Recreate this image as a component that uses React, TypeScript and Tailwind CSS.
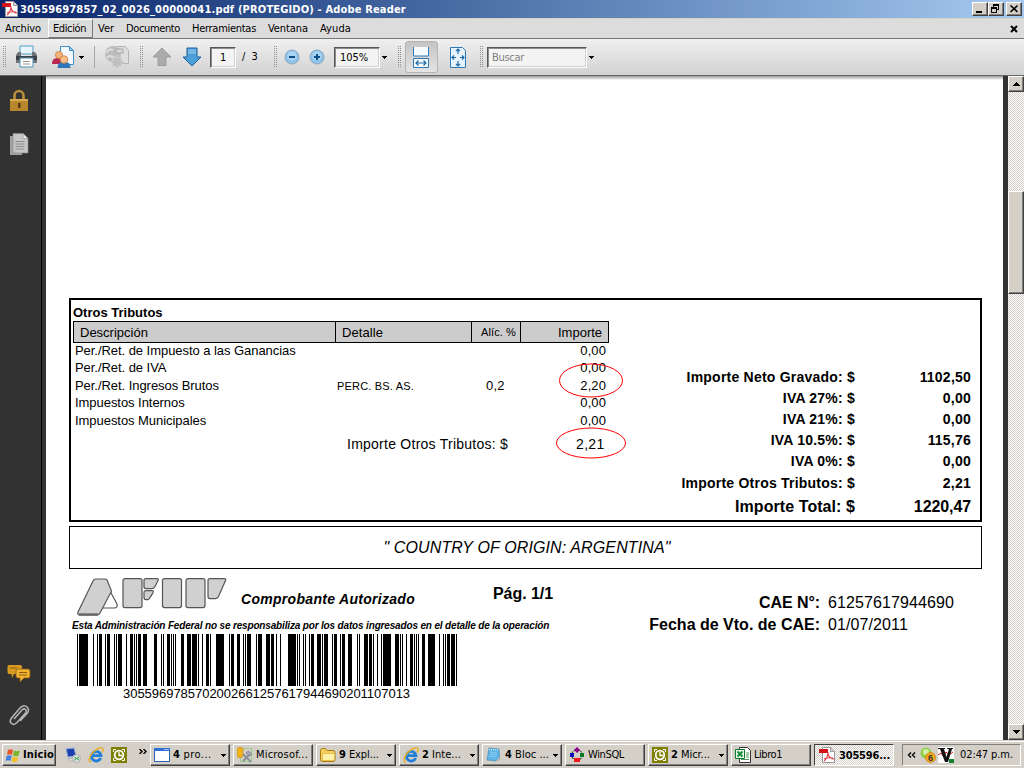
import React from "react";

const T = ({ c = "", children }: { c?: string; children: string }) => (
  <span className={"inline-block whitespace-pre " + c}>{children}</span>
);

const raised = "border border-t-white border-l-white border-r-[#404040] border-b-[#404040] bg-[#d4d0c8] shadow-[inset_-1px_-1px_0_#808080]";
const sunken = "border border-t-[#55575b] border-l-[#55575b] border-r-white border-b-white bg-[#f4f4f4] shadow-[inset_1px_1px_0_#8c8c8c,inset_-1px_-1px_0_#d4d0c8]";

// Barcode bars as [offset, width] pairs
const bars: [number, number][] = [
  [0, 1], [2, 9], [16, 1], [20, 1], [22, 3], [28, 1], [30, 3], [37, 1], [39, 1], [41, 4], [49, 1], [53, 3],
  [57, 1], [59, 1], [61, 3], [66, 4], [77, 3], [84, 1], [86, 1], [90, 3], [94, 1], [96, 1], [98, 1], [104, 3],
  [110, 4], [115, 5], [121, 1], [125, 1], [129, 3], [133, 1], [139, 8], [152, 1], [154, 3], [160, 3], [166, 1],
  [168, 1], [170, 4], [179, 1], [181, 4], [189, 4], [194, 3], [199, 1], [203, 1], [211, 8], [220, 1], [222, 1],
  [226, 1], [228, 1], [232, 1], [234, 3], [240, 4], [245, 1], [247, 4], [255, 1], [257, 3], [263, 1], [265, 3],
  [271, 4], [280, 1], [282, 1], [287, 4], [292, 3], [296, 1], [300, 1], [304, 1], [306, 8], [318, 4], [323, 1],
  [325, 1], [329, 1], [333, 3], [337, 1], [339, 1], [341, 1], [345, 3], [351, 7], [362, 1], [366, 1], [368, 1],
  [370, 3], [374, 4], [379, 1],
];

const PdfIcon = () => (
  <svg className="shrink-0" width="16" height="16" viewBox="0 0 16 16">
    <path d="M3.5.5h8l4 4v11h-12z" fill="#fff" stroke="#999" />
    <path d="M11.500.5v4h4" fill="#ddd" stroke="#999" />
    <path d="M0 2h9v4H0z" fill="#d3121a" />
    <path d="M5 14c2-1 4-5 4-9m0 2c1 3 3 5 6 5M5 12c3-1.500 6-1.500 9-1" fill="none" stroke="#e0383e" strokeWidth="1.100" />
  </svg>
);
const ClockIcon = () => (
  <svg className="shrink-0" width="16" height="16" viewBox="0 0 16 16">
    <path d="M0 0h16v16H0z" fill="#808000" />
    <path d="M2.500 5V2.500H5M11 2.500h2.500V5M13.500 11v2.500H11M5 13.500H2.500V11" fill="none" stroke="#fff" />
    <circle cx="8" cy="8" r="4.300" fill="none" stroke="#fff" strokeWidth="1.800" />
    <path d="M8 5v3.500h3" fill="none" stroke="#fff" strokeWidth="1.300" />
  </svg>
);
const IeIcon = () => (
  <svg className="shrink-0" width="16" height="16" viewBox="0 0 16 16">
    <path d="M12.700 11A4.800 4.800 0 1 1 13 8.700H5" fill="none" stroke="#1f7fd8" strokeWidth="2.800" />
    <path d="M4 4.500Q6 3 9 3.500" fill="none" stroke="#7cc4f4" />
    <path d="M3 15C-2 14 4 3 12 1c4-.8 3.500 2.500 2 4.500" fill="none" stroke="#e8b020" strokeWidth="1.400" />
  </svg>
);
const DesktopIcon = () => (
  <svg className="shrink-0" width="16" height="16" viewBox="0 0 16 16">
    <path d="M1 2l8-1 2 8-8 1z" fill="#1c3fae" stroke="#8fa4d8" />
    <path d="M3 12l8-1.500 1 2-7 2z" fill="#ddd" stroke="#888" strokeWidth=".5" />
    <circle cx="11.500" cy="11.500" r="4" fill="#d9ddd9" stroke="#999" strokeWidth=".6" />
    <path d="M9.500 10l2 1.500-2 1.500M14 10l-2 1.500 2 1.500" fill="none" stroke="#1b9a3a" />
  </svg>
);
const WindowIcon = () => (
  <svg className="shrink-0" width="16" height="14" viewBox="0 0 16 14">
    <path d="M.5.5h15v13H.5z" fill="#fff" stroke="#2b62b8" />
    <path d="M0 0h16v3H0z" fill="#2f6fd6" />
    <path d="M10 1h5v1h-5z" fill="#9cc0f2" />
  </svg>
);
const ToolsIcon = () => (
  <svg className="shrink-0" width="16" height="16" viewBox="0 0 16 16">
    <path d="M3.500 1.500h11v13h-11z" fill="none" stroke="#5ad05a" strokeDasharray="1 1" />
    <path d="M0 2c0-2 6-2 6 0v7c0 2-6 2-6 0z" fill="#f1b31c" stroke="#c98a10" strokeWidth=".7" />
    <path d="M6 14l7-7M6 7l8 8" stroke="#8a8f98" strokeWidth="2" />
    <path d="M11 4l4 3-2 2-4-3z" fill="#aab" stroke="#667" strokeWidth=".6" />
  </svg>
);
const FolderIcon = () => (
  <svg className="shrink-0" width="16" height="14" viewBox="0 0 16 14">
    <path d="M.5 2.500q0-2 2-2h3l1.500 2h6q2 0 2 2v7q0 2-2 2h-10q-2.500 0-2.500-2z" fill="#f3cf5c" stroke="#a87a10" />
    <path d="M2.500 5.500h12v5.500q0 1.500-1.500 1.500H2.500z" fill="#fdf0a8" stroke="#e0b33c" strokeWidth=".7" />
  </svg>
);
const NoteIcon = () => (
  <svg className="shrink-0" width="16" height="16" viewBox="0 0 16 16">
    <path d="M3 1l10 1 .5 9L10 14 1 13z" fill="#5fb4e6" stroke="#3a83b5" strokeWidth=".6" />
    <path d="M3 2.500l10 .5" stroke="#dff" strokeDasharray="1 1" />
    <path d="M10 14l5-1-1.500-3z" fill="#b9b9b9" />
    <path d="M4 5l7 1M4 7l7 1M3 9l7 1" stroke="#8fd0f2" strokeWidth=".8" />
  </svg>
);
const WinSqlIcon = () => (
  <svg className="shrink-0" width="16" height="16" viewBox="0 0 16 16">
    <circle cx="8" cy="8" r="5.300" fill="none" stroke="#000" strokeDasharray="2 1" />
    <path d="M8 0l3 3-3 3-3-3z" fill="#8b008b" />
    <path d="M1 6h4v4H1z" fill="#1010c0" />
    <path d="M11 6h4v4h-4z" fill="#0a7a2a" />
    <path d="M5 11h6v4H5z" fill="#f01818" />
  </svg>
);
const ExcelIcon = () => (
  <svg className="shrink-0" width="16" height="16" viewBox="0 0 16 16">
    <path d="M4.500.5h8l3 3v12h-11z" fill="#fff" stroke="#333" />
    <path d="M11 6h3M11 8h3M11 10h3M6 12.500h8" stroke="#4a9a5a" />
    <path d="M.5 2.500h9v9h-9z" fill="#e8f6ea" stroke="#0c7a2c" />
    <path d="M2.500 4.500l5 5M7.500 4.500l-5 5" stroke="#108a34" strokeWidth="1.800" />
  </svg>
);
const WinFlag = () => (
  <svg className="shrink-0" width="16" height="15" viewBox="0 0 16 15">
    <path d="M3 2q2.500-1.500 5 0L7 7Q4.500 5.500 2 7z" fill="#e8532a" />
    <path d="M9 2.500q2.500 1.500 6 0L13.500 7.500q-3 1.500-5.500 0z" fill="#78b82c" />
    <path d="M1.700 8q2.500-1.500 5 0L5.500 13Q3 11.500.5 13z" fill="#3f7fe0" />
    <path d="M7.700 8.500q2.500 1.500 5.500 0L12 13.500q-3 1.500-5.500 0z" fill="#f3bf28" />
  </svg>
);

const Grip = ({ c = "" }: { c?: string }) => (
  <svg className={"shrink-0 " + c} width="4" height="22" viewBox="0 0 4 22" shapeRendering="crispEdges">
    <path d="M.5 0v22M2.500 0v22" stroke="#8f8f8f" strokeDasharray="1 1" />
  </svg>
);
const Caret = ({ c = "" }: { c?: string }) => (
  <svg className={"shrink-0 " + c} width="5" height="3" viewBox="0 0 5 3" shapeRendering="crispEdges">
    <path d="M0 0h5v1H4v1H3v1H2V2H1V1H0z" fill="#000" />
  </svg>
);

const menu: [string, string][] = [
  ["Archivo", "w-[48px] pl-[5px] pt-px tracking-[-0.14px]"],
  ["Edición", "w-[45px] pl-[4px] border border-t-white border-l-white border-r-[#777] border-b-[#777] tracking-[-0.4px]"],
  ["Ver", "w-[28px] pl-[5px] pt-px"],
  ["Documento", "w-[66px] pl-[5px] pt-px tracking-[-0.37px]"],
  ["Herramientas", "w-[76px] pl-[5px] pt-px tracking-[-0.28px]"],
  ["Ventana", "w-[52px] pl-[5px] pt-px tracking-[-0.08px]"],
  ["Ayuda", "w-[52px] pl-[5px] pt-px tracking-[0.1px]"],
];

const rows: [string, string, string, string, string][] = [
  ["Per./Ret. de Impuesto a las Ganancias", "", "", "0,00", "h-[16px] leading-[16px]"],
  ["Per./Ret. de IVA", "", "", "0,00", "h-[18px] leading-[18px]"],
  ["Per./Ret. Ingresos Brutos", "PERC. BS. AS.", "0,2", "2,20", "h-[17px] leading-[17px]"],
  ["Impuestos Internos", "", "", "0,00", "h-[18px] leading-[18px]"],
  ["Impuestos Municipales", "", "", "0,00", "h-[18px] leading-[18px]"],
];
const totals: [string, string][] = [
  ["Importe Neto Gravado: $", "1102,50"],
  ["IVA 27%: $", "0,00"],
  ["IVA 21%: $", "0,00"],
  ["IVA 10.5%: $", "115,76"],
  ["IVA 0%: $", "0,00"],
];
const tasks: [() => React.JSX.Element, string, string, string, boolean][] = [
  [WindowIcon, "4", " pro...", "tracking-[0.45px]", true],
  [ToolsIcon, "", "Microsof...", "tracking-[0.19px]", false],
  [FolderIcon, "9", " Expl...", "tracking-[-0.1px]", true],
  [IeIcon, "2", " Inte...", "tracking-[0.03px]", true],
  [NoteIcon, "4", " Bloc ...", "tracking-[0.03px]", true],
  [WinSqlIcon, "", "WinSQL", "tracking-[-0.36px]", false],
  [ClockIcon, "2", " Micr...", "tracking-[-0.04px]", true],
  [ExcelIcon, "", "Libro1", "tracking-[-0.45px]", false],
];

export default function App() {
  return (
    <div className="flex h-[768px] w-[1024px] flex-col overflow-hidden bg-white font-['DejaVu_Sans_Condensed','DejaVu_Sans',sans-serif] text-[11px] text-black">
      <header className="flex h-[18px] shrink-0 items-center bg-linear-to-r from-[#0a246a] to-[#a6caf0] px-[2px]">
        <PdfIcon />
        <T c="ml-[2px] pt-[2px] font-bold leading-[18px] tracking-[0.16px] text-white">30559697857_02_0026_00000041.pdf (PROTEGIDO) - Adobe Reader</T>
        <div className="ml-auto flex h-[14px]">
          <div className={"w-4 " + raised}>
            <svg width="14" height="12" shapeRendering="crispEdges"><path d="M3 8h6v2H3z" /></svg>
          </div>
          <div className={"w-4 " + raised}>
            <svg width="14" height="12" shapeRendering="crispEdges"><path d="M4 1h6v2H4zM4 3h1v1H4zM9 3h1v4H9zM8 6h2v1H8zM2 4h6v2H2zM2 6h1v4H2zM7 6h1v4H7zM2 9h6v1H2z" /></svg>
          </div>
          <div className={"ml-[2px] w-4 " + raised}>
            <svg width="14" height="12"><path d="M3.500 2.500l7 6.500M10.500 2.500l-7 6.500" stroke="#000" strokeWidth="1.600" /></svg>
          </div>
        </div>
      </header>

      <nav className="flex h-[20px] shrink-0 border-t border-[#d9d3c8] bg-[#dcdcdc]">
        {menu.map(([t, c]) => (
          <div key={t} className={"leading-[18px] " + c}><T>{t}</T></div>
        ))}
        <svg className="ml-auto mr-[6px] mt-[6px]" width="8" height="8"><path d="M1 1l6 6M7 1L1 7" stroke="#000" strokeWidth="2" /></svg>
      </nav>

      <div className="flex h-[38px] shrink-0 items-center border-t border-b border-b-[#666] border-t-[#777] bg-linear-to-b from-[#f0f0f0] to-[#d2d2d2] pl-[3px]">
        <Grip />
        <svg className="ml-[8px] shrink-0" width="24" height="24" viewBox="0 0 24 24">
          <path d="M5 1h13v8H5z" fill="#e8f6fc" stroke="#4d9fc4" />
          <path d="M3 7h3v4h11V7h3l2 3v8H1v-8z" fill="#6f7377" />
          <path d="M1 11h21v4H1z" fill="#3e4246" />
          <path d="M5 13h13v9H5z" fill="#fff" stroke="#4d8fb4" />
          <path d="M8 16.500h7M8 19h7" stroke="#999" />
        </svg>
        <svg className="ml-[12px] shrink-0" width="24" height="24" viewBox="0 0 24 24">
          <path d="M9.500 1.500h9l4 4v14h-13z" fill="#f2f8fd" stroke="#3f8fc8" />
          <path d="M18.500 1.500v4h4z" fill="#9cc8e8" stroke="#3f8fc8" />
          <path d="M1 19q0-6 5-6h4q3 1 3 6z" fill="#b8284e" />
          <circle cx="8" cy="10" r="3.600" fill="#f2b27a" stroke="#c9803c" strokeWidth=".8" />
          <path d="M6.500 23q0-6 5-6h3q5 0 5 6z" fill="#2f78b8" />
          <circle cx="13" cy="14.500" r="3.800" fill="#f6bd88" stroke="#c9803c" strokeWidth=".8" />
        </svg>
        <Caret c="ml-[4px]" />
        <div className="ml-[10px] h-[22px] w-px shrink-0 bg-[#a5a5a5]" />
        <svg className="ml-[9px] shrink-0" width="26" height="24" viewBox="0 0 26 24">
          <path d="M12.500 1.500h9l3 4v13h-12z" fill="#dedede" stroke="#b4b4b4" />
          <circle cx="9" cy="9" r="8" fill="#bcbcbc" />
          <path d="M2 8q3-5 7-3M3 13q3-4 7 0" fill="none" stroke="#dedede" strokeWidth="2" />
          <path d="M12 4h7v4h-7z" fill="#d8d8d8" stroke="#a8a8a8" />
          <path d="M13 10l1.800 3 3.200-1-1 3.200 3 1.800-3 1.800 1 3.200-3.200-1L13 24l-1.800-3L8 22l1-3.200L6 17l3-1.800L8 12l3.200 1z" fill="#c0c0c0" stroke="#d8d8d8" strokeWidth=".7" />
        </svg>
        <Grip c="ml-[10px]" />
        <svg className="ml-[8px] shrink-0" width="20" height="20" viewBox="0 0 20 20"><path d="M10 1l9 9h-5v8.500H6V10H1z" fill="#ababab" stroke="#9c9c9c" /></svg>
        <svg className="ml-[10px] shrink-0" width="20" height="20" viewBox="0 0 20 20"><path d="M10 19l9-9h-4V1H5v9H1z" fill="#4d9fdb" stroke="#1f5f98" /><path d="M6 2h8v5H6z" fill="#74b6e6" /></svg>
        <div className={"ml-[8px] h-[21px] w-[26px] shrink-0 pl-[9px] leading-[20px] " + sunken}><T>1</T></div>
        <T c="ml-[6px] pt-px">/  3</T>
        <Grip c="ml-[16px]" />
        <svg className="ml-[6px] shrink-0" width="16" height="16" viewBox="0 0 16 16"><circle cx="8" cy="8" r="7" fill="#8fc3ea" stroke="#8aa6be" /><circle cx="8" cy="7" r="4.500" fill="#a9d4f3" /><path d="M5 8h6" stroke="#0d4c86" strokeWidth="2" /></svg>
        <svg className="ml-[9px] shrink-0" width="16" height="16" viewBox="0 0 16 16"><circle cx="8" cy="8" r="7" fill="#8fc3ea" stroke="#8aa6be" /><circle cx="8" cy="7" r="4.500" fill="#a9d4f3" /><path d="M5 8h6M8 5v6" stroke="#0d4c86" strokeWidth="2" /></svg>
        <div className={"ml-[9px] h-[21px] w-[46px] shrink-0 pl-[5px] leading-[20px] " + sunken}><T>105%</T></div>
        <Caret c="ml-[2px]" />
        <Grip c="ml-[11px]" />
        <div className="ml-[3px] flex h-[32px] w-[33px] shrink-0 items-center justify-center rounded-[3px] border border-[#b4b4b4] bg-linear-to-b from-[#c4c4c4] to-[#e4e4e4]">
          <svg width="16" height="21" viewBox="0 0 16 21">
            <path d="M.5 0v9h15V0" fill="#f5fafe" stroke="#2f7ab4" />
            <path d="M.5 11.500h15v9H.5z" fill="#f5fafe" stroke="#2f7ab4" />
            <path d="M3 16h10M5.500 13.500L3 16l2.500 2.500M10.500 13.500L13 16l-2.500 2.500" fill="none" stroke="#1d6aa8" strokeWidth="1.200" />
          </svg>
        </div>
        <svg className="ml-[12px] shrink-0" width="16" height="21" viewBox="0 0 16 21">
          <path d="M.5.5h12l3 3v17H.5z" fill="#e6f3fc" stroke="#2f7ab4" />
          <path d="M8 2v5M8 14v5M2 10.500h4M10 10.500h4M6 4l2-2 2 2M6 17l2 2 2-2M4 8.500l-2 2 2 2M12 8.500l2 2-2 2" fill="none" stroke="#1d6aa8" strokeWidth="1.200" />
        </svg>
        <Grip c="ml-[14px]" />
        <div className={"ml-[3px] h-[21px] w-[100px] shrink-0 pl-[4px] leading-[20px] text-[#7d7d7d] " + sunken}><T c="tracking-[-0.3px]">Buscar</T></div>
        <Caret c="ml-[2px]" />
      </div>

      <main className="flex h-[664px] shrink-0 bg-[#323232]">
        <aside className="flex w-[42px] flex-col items-center border-r border-black pr-[4px] pt-[13px]">
          <svg width="20" height="24" viewBox="0 0 20 24">
            <path d="M5.500 11V6.500a4.500 4.500 0 0 1 9 0V11" fill="none" stroke="#b8903c" strokeWidth="2.600" />
            <path d="M1 10h18v12H1z" fill="#b8862c" /><path d="M1 10h18v2H1z" fill="#d8aa50" />
            <path d="M9 14h2.500v5H9z" fill="#553a10" />
          </svg>
          <svg className="mt-[20px]" width="20" height="23" viewBox="0 0 20 23">
            <path d="M1 3h12v19H1z" fill="#a3a3a3" />
            <path d="M4 .5h10l5 5V20H4z" fill="#c6c6c6" stroke="#8a8a8a" strokeWidth=".7" />
            <path d="M14 .5v5h5z" fill="#eee" stroke="#888" strokeWidth=".6" />
            <path d="M6.500 8.500h9M6.500 11h9M6.500 13.500h9M6.500 16h9" stroke="#8a8a8a" />
          </svg>
          <svg className="mt-auto" width="24" height="20" viewBox="0 0 24 20">
            <path d="M2 1h11q2 0 2 2v5q0 2-2 2H7l-2 4-.5-4H2Q.5 10 .5 8V3q0-2 1.500-2z" fill="#d89a20" />
            <path d="M11 5h10q2 0 2 2v5q0 2-2 2h-4l-4 4v-4h-2q-2 0-2-2V7q0-2 2-2z" fill="#f0b432" stroke="#8a5c0c" strokeWidth=".8" />
            <path d="M12 8.500h8M12 11h8M3 4h7" stroke="#8a5c0c" />
          </svg>
          <svg className="mb-[12px] mt-[20px]" width="22" height="24" viewBox="0 0 22 24">
            <path d="M6 15l8-9q2-2 3.500-.5t0 3.500L9 18.500q-3 3-5.500 1t0-5.500L12 4q4-4 7-1t0 6.500L12 17" fill="none" stroke="#b4b4b4" strokeWidth="1.600" />
          </svg>
        </aside>
        <div className="ml-[4px] w-[957px] shrink-0 bg-white">
          <div className="h-[4px] bg-linear-to-b from-[#999] to-white" />
          <div className="ml-[23px] w-[913px] pt-[218px] font-['Liberation_Sans',Arial,sans-serif]">
            <section className="relative flex h-[224px] justify-between border-2 border-black">
              <div className="ml-[2px] w-[536px] pt-[3px] text-[13px]">
                <div className="h-[18px] leading-[20px]"><T c="font-bold">Otros Tributos</T></div>
                <div className="grid h-[22px] grid-cols-[262px_136px_49px_87px] border border-black bg-[#ccc] leading-[22px]">
                  <div className="h-[20px] border-r border-black pl-[6px]"><T>Descripción</T></div>
                  <div className="h-[20px] border-r border-black pl-[6px]"><T c="tracking-[0.08px]">Detalle</T></div>
                  <div className="h-[20px] border-r border-black pl-[9px] text-[11px] leading-[21px]"><T c="tracking-[0.11px]">Alíc. %</T></div>
                  <div className="pl-[37px]"><T>Importe</T></div>
                </div>
                {rows.map(([a, b, c, d, h]) => (
                  <div key={a} className={"grid grid-cols-[262px_149px_60px_60px] pl-[2px] " + h}>
                    <div><T c="tracking-[-0.05px]">{a}</T></div>
                    <div className="pt-px text-[11px]">{b && <T c="tracking-[0.19px]">{b}</T>}</div>
                    <div>{c && <T c="tracking-[0.2px]">{c}</T>}</div>
                    <div className="text-right"><T c="tracking-[0.1px]">{d}</T></div>
                  </div>
                ))}
                <div className="flex h-[28px] pl-[274px] text-[14px] leading-[28px]">
                  <T c="tracking-[0.25px]">Importe Otros Tributos: $</T>
                  <T c="ml-[68px] tracking-[0.3px]">2,21</T>
                </div>
              </div>
              <div className="mr-[9px] mt-[67px] grid w-[300px] auto-rows-[21px] grid-cols-[184px_116px] text-right text-[14px] font-bold leading-[21px] tracking-[0.22px]">
                {totals.map(([a, b]) => (
                  <React.Fragment key={a}>
                    <div><T>{a}</T></div>
                    <div><T>{b}</T></div>
                  </React.Fragment>
                ))}
                <div className="h-[22px] leading-[23px]"><T>Importe Otros Tributos: $</T></div>
                <div className="h-[22px] leading-[23px]"><T>2,21</T></div>
                <div className="pt-px text-[16px] leading-[25px] tracking-[0.07px]"><T>Importe Total: $</T></div>
                <div className="pt-px text-[16px] leading-[25px] tracking-[-0.1px]"><T>1220,47</T></div>
              </div>
              <svg className="absolute left-[482px] top-[63px]" width="74" height="98" viewBox="0 0 74 98" fill="none" stroke="#f00">
                <ellipse cx="38" cy="17.500" rx="31.500" ry="16.500" />
                <ellipse cx="38" cy="80" rx="34.500" ry="15" />
              </svg>
            </section>
            <section className="mt-[4px] h-[43px] border border-black pl-[3px] text-center text-[16px] italic leading-[41px]"><T c="tracking-[0.12px]">" COUNTRY OF ORIGIN: ARGENTINA"</T></section>
            <footer className="flex pl-[3px]">
              <div className="w-[421px]">
                <div className="flex h-[51px] pl-[5px] pt-[8px]">
                  <svg width="152" height="40" viewBox="0 0 152 40" fill="#d0d0d0" stroke="#555" strokeWidth="1.200">
                    <path d="M33 14l7 13q1 4-3 4H25" fill="#fff" />
                    <path d="M19 2h9q2 0 2 1l4 10q1 1-.5 3L23 36q-1 2-3 2H3q-3 0-2-3L16 4q1-2 3-2z" />
                    <path d="M2 37.500h19" stroke="#666" strokeWidth="2.400" />
                    <rect x="46" y="1.600" width="19" height="29" rx="2" />
                    <path d="M69 1.600h11q2 0 1 2l-3 6q-1 2-3 2h-6q-2 0-2-2v-6q0-2 2-2zM69 13.600h6q2 0 1 2l-3 5q-1 2-2 2h-2q-2 0-2-2v-5q0-2 2-2z" />
                    <rect x="85.500" y="1.600" width="19" height="29" rx="2" />
                    <rect x="109" y="1.600" width="19" height="29" rx="2" />
                    <path d="M133 1.600h14q2.500 0 1.500 2l-7 16q-1 2-3 2H133q-2 0-2-2v-16q0-2 2-2z" />
                  </svg>
                  <T c="ml-[12px] pt-[12px] text-[14px] font-bold italic leading-[20px] tracking-[0.3px]">Comprobante Autorizado</T>
                </div>
                <div className="h-[14px] text-[10px] font-bold italic leading-[12px]"><T c="tracking-[-0.16px]">Esta Administración Federal no se responsabiliza por los datos ingresados en el detalle de la operación</T></div>
                <svg className="ml-[5px] block" width="380" height="52" shapeRendering="crispEdges">
                  {bars.map(([x, w]) => <rect key={x} x={x} y="0" width={w} height="52" />)}
                </svg>
                <div className="pl-[51px] text-[13px] leading-[15px]"><T c="tracking-[-0.03px]">3055969785702002661257617944690201107013</T></div>
              </div>
              <div className="pt-[15px] text-[16px] font-bold leading-[20px]"><T c="tracking-[-0.06px]">Pág. 1/1</T></div>
              <div className="ml-[90px] grid w-[320px] auto-rows-[22px] grid-cols-[177px_1fr] gap-x-[8px] pt-[23px] text-[16px] leading-[22px]">
                <div className="text-right"><T c="font-bold tracking-[-0.07px]">CAE N°:</T></div>
                <div><T c="tracking-[0.1px]">61257617944690</T></div>
                <div className="text-right"><T c="font-bold">Fecha de Vto. de CAE:</T></div>
                <div><T c="tracking-[0.1px]">01/07/2011</T></div>
              </div>
            </footer>
          </div>
        </div>
        <div className="ml-auto flex w-[16px] flex-col bg-[repeating-conic-gradient(#fff_0_25%,#d4d0c8_0_50%)] bg-size-[2px_2px]">
          <div className={"flex h-[16px] items-center justify-center " + raised}><svg width="7" height="4" shapeRendering="crispEdges"><path d="M3 0h1v1h1v1h1v1h1v1H0V3h1V2h1V1h1z" /></svg></div>
          <div className={"mt-[99px] h-[103px] " + raised} />
          <div className={"mt-auto flex h-[16px] items-center justify-center " + raised}><svg width="7" height="4" shapeRendering="crispEdges"><path d="M3 4h1V3h1V2h1V1h1V0H0v1h1v1h1v1h1z" /></svg></div>
        </div>
      </main>

      <footer className="flex h-[28px] shrink-0 items-start border-t border-[#d4d0c8] bg-[#d4d0c8] pl-[2px] pt-[3px] shadow-[inset_0_1px_0_#fff]">
        <div className={"flex h-[22px] w-[54px] shrink-0 items-center pl-[2px] " + raised}><WinFlag /><T c="ml-[2px] pt-px font-bold tracking-[0.14px]">Inicio</T></div>
        <div className="ml-[9px] flex h-[22px] w-[84px] shrink-0 items-center gap-[7px]"><DesktopIcon /><IeIcon /><ClockIcon />
          <svg className="mb-[8px] ml-[5px] shrink-0" width="8" height="5"><path d="M.5 0L3 2.500.5 5M4.500 0L7 2.500 4.500 5" fill="none" stroke="#000" strokeWidth="1.400" /></svg>
        </div>
        <div className="ml-[1px] flex shrink-0 gap-[3px]">
          {tasks.map(([I, b, t, c, caret], i) => (
            <div key={i} className={"flex h-[22px] w-[80px] items-center px-[3px] " + raised}>
              <I />
              <span className="ml-[3px] inline-flex pt-px">{b && <T c="font-bold">{b}</T>}<T c={c}>{t}</T></span>
              {caret && <Caret c="ml-auto" />}
            </div>
          ))}
          <div className="flex h-[22px] w-[80px] items-center border border-t-[#404040] border-l-[#404040] border-r-white border-b-white bg-[repeating-conic-gradient(#fff_0_25%,#d4d0c8_0_50%)] bg-size-[2px_2px] pl-[4px]"><PdfIcon /><T c="ml-[4px] pt-[2px] font-bold tracking-[-0.18px]">305596...</T></div>
        </div>
        <div className="ml-[8px] flex h-[22px] w-[119px] shrink-0 items-center border border-t-[#808080] border-l-[#808080] border-r-white border-b-white pl-[4px]">
          <svg className="shrink-0" width="9" height="6"><path d="M4 .5L1.500 3 4 5.500M8 .5L5.500 3 8 5.500" fill="none" stroke="#000" strokeWidth="1.400" /></svg>
          <svg className="ml-[4px] shrink-0" width="16" height="16"><circle cx="6" cy="6" r="5.500" fill="#8ed04a" /><circle cx="6" cy="5" r="3" fill="#d4f0a8" /><circle cx="10.500" cy="10.500" r="5" fill="#f6a81c" stroke="#c47a0a" strokeWidth=".7" /><text x="8" y="14" fontSize="9" fontWeight="bold" fontFamily="Liberation Sans" fill="#333">6</text></svg>
          <svg className="ml-[2px] shrink-0" width="16" height="16"><path d="M0 0h16v16H0z" fill="#fff" /><path d="M0 8l3-2 2 3 3-4 3 3 4-3" fill="none" stroke="#d22" /><path d="M0 1h7v1H6l2.500 8L11 2H9V1h6v1h-1l-4 13H7L2 2H0z" fill="#111" /><path d="M11 12h5v4h-5z" fill="#16802c" /></svg>
          <T c="ml-[6px] pt-px tracking-[-0.09px]">02:47 p.m.</T>
        </div>
      </footer>
    </div>
  );
}
